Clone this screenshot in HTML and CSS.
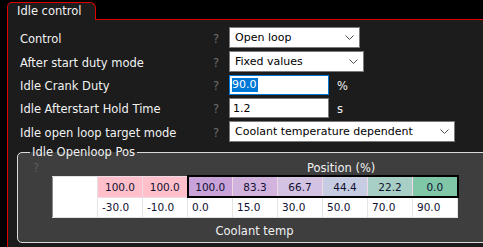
FILE: index.html
```html
<!DOCTYPE html>
<html lang="en">

<head>
    <meta charset="UTF-8">
    <title>Idle control</title>
    <link rel="stylesheet" href="styles.css">
</head>

<body>
    <div class="window">
        <div class="tabbar">
            <div class="tab">Idle control</div>
            <div class="tabbar-rest"></div>
        </div>

        <div class="page">
            <div class="form">
                <div class="label">Control</div>
                <div class="help">?</div>
                <div class="ctrl">
                    <div class="combo combo-1">Open loop
                        <svg class="chev" width="9" height="5" viewBox="0 0 9 5"><path d="M0.5 0.5 L4.5 4.5 L8.5 0.5" /></svg>
                    </div>
                </div>

                <div class="label">After start duty mode</div>
                <div class="help">?</div>
                <div class="ctrl">
                    <div class="combo combo-2">Fixed values
                        <svg class="chev" width="9" height="5" viewBox="0 0 9 5"><path d="M0.5 0.5 L4.5 4.5 L8.5 0.5" /></svg>
                    </div>
                </div>

                <div class="label">Idle Crank Duty</div>
                <div class="help">?</div>
                <div class="ctrl">
                    <div class="field focused"><span class="sel">90.0</span></div>
                    <span class="unit">%</span>
                </div>

                <div class="label">Idle Afterstart Hold Time</div>
                <div class="help">?</div>
                <div class="ctrl">
                    <div class="field">1.2</div>
                    <span class="unit">s</span>
                </div>

                <div class="label">Idle open loop target mode</div>
                <div class="help">?</div>
                <div class="ctrl">
                    <div class="combo combo-4">Coolant temperature dependent
                        <svg class="chev" width="9" height="5" viewBox="0 0 9 5"><path d="M0.5 0.5 L4.5 4.5 L8.5 0.5" /></svg>
                    </div>
                </div>
            </div>

            <fieldset class="group">
                <legend>Idle Openloop Pos</legend>
                <div class="group-head">
                    <span class="help group-help">?</span>
                    <span class="axis-title">Position (%)</span>
                </div>
                <table class="map">
                    <tr class="values">
                        <td class="corner" rowspan="2"></td>
                        <td class="c-pink">100.0</td>
                        <td class="c-pink">100.0</td>
                        <td class="c1 sel-cell sel-first">100.0</td>
                        <td class="c2 sel-cell">83.3</td>
                        <td class="c3 sel-cell">66.7</td>
                        <td class="c4 sel-cell">44.4</td>
                        <td class="c5 sel-cell">22.2</td>
                        <td class="c6 sel-cell sel-last">0.0</td>
                    </tr>
                    <tr class="bins">
                        <td>-30.0</td>
                        <td>-10.0</td>
                        <td>0.0</td>
                        <td>15.0</td>
                        <td>30.0</td>
                        <td>50.0</td>
                        <td>70.0</td>
                        <td>90.0</td>
                    </tr>
                </table>
                <div class="axis-x">Coolant temp</div>
            </fieldset>
        </div>
    </div>
</body>

</html>
```

FILE: styles.css
```css
html,
body {
    margin: 0;
    background: #000;
    overflow: hidden;
}

body {
    font-family: "DejaVu Sans", Verdana, sans-serif;
    font-size: 11.5px;
    color: #f2f2f2;
}

.window {
    width: calc(100vw - 7px);
    height: calc(100vh - 2px);
    margin: 2px 0 0 7px;
    overflow: hidden;
}

/* tab strip */
.tabbar {
    display: flex;
    height: 18px;
}

.tab {
    box-sizing: border-box;
    width: 89px;
    height: 18px;
    padding: 1px 0 0 9px;
    line-height: 14px;
    background: #1c1c1c;
    border: 1px solid #e00000;
    border-bottom: none;
    border-radius: 5px 6px 0 0;
}

.tabbar-rest {
    flex: 1;
    border-bottom: 1px solid #e00000;
}

.page {
    height: calc(100% - 18px);
    padding: 7px 0 0 12px;
    background: #1c1c1c;
    border-left: 1px solid #e00000;
    overflow: hidden;
}

/* form rows */
.form {
    display: grid;
    grid-template-columns: 193px 16px auto;
    row-gap: 3px;
    align-items: center;
}

.label {
    line-height: 14px;
    padding-top: 2px;
}

.help {
    color: #6e6e6e;
    line-height: 14px;
    padding-top: 2px;
}

.ctrl {
    display: flex;
    align-items: center;
    gap: 8px;
}

.combo,
.field {
    box-sizing: border-box;
    display: flex;
    align-items: center;
    background: #fff;
    color: #000;
    font-size: 11px;
    border: 1px solid #7a7a7a;
}

.combo {
    justify-content: space-between;
    height: 21px;
    padding: 0 5px 0 5px;
}

.combo-1 {
    width: 131px;
}

.combo-2 {
    width: 135px;
}

.combo-4 {
    width: 226px;
}

.chev path {
    fill: none;
    stroke: #505050;
    stroke-width: 1;
}

.field {
    width: 100px;
    height: 20px;
    padding: 0 3px;
}

.field.focused {
    border-color: #0078d7;
    padding-left: 2px;
}

.sel {
    background: #0078d7;
    color: #fff;
    line-height: 14px;
    padding-right: 1px;
}

.unit {
    line-height: 14px;
    padding-top: 2px;
}

/* group box with the map */
.group {
    box-sizing: border-box;
    width: 560px;
    margin: 3px 0 0 -3px;
    padding: 2px 12px 4px;
    background: #3e3e3e;
    border: 1px solid #dadada;
    border-radius: 5px;
}

.group legend {
    padding: 0 2px;
    line-height: 14px;
}

.group-head {
    display: flex;
    height: 14px;
    line-height: 14px;
}

.group-help {
    width: 19px;
    padding: 0 0 0 3px;
    color: #5c5c5c;
}

.axis-title {
    padding-left: 255px;
}

.map {
    margin-left: 22px;
    border-collapse: collapse;
    table-layout: fixed;
    font-size: 10.5px;
    color: #101030;
    border: 1px solid #8c8c8c;
}

.map td {
    width: 45px;
    box-sizing: border-box;
    padding: 0 4px;
    white-space: nowrap;
}

.values td {
    height: 21px;
    text-align: center;
    border: 1px solid #efd9e4;
}

.bins td {
    height: 20px;
    background: #fff;
    border: 1px solid #e3e3e3;
}

.map td.corner {
    background: #fff;
    border: 1px solid #e3e3e3;
    border-left-color: #8c8c8c;
}

.c-pink {
    background: #ffc0cb;
}

.c1 {
    background: #c8a2d8;
}

.c2 {
    background: #d1b3de;
}

.c3 {
    background: #d3c2e2;
}

.c4 {
    background: #c6cde2;
}

.c5 {
    background: #a8cfc5;
}

.c6 {
    background: #80c7a8;
}

.values td.sel-cell {
    border-top: 2px solid #000;
    border-bottom: 2px solid #000;
}

.values td.sel-first {
    border-left: 2px solid #000;
}

.values td.sel-last {
    border-right: 2px solid #000;
}

.axis-x {
    width: 405px;
    margin: 6px 0 0 22px;
    text-align: center;
    line-height: 14px;
}
```
